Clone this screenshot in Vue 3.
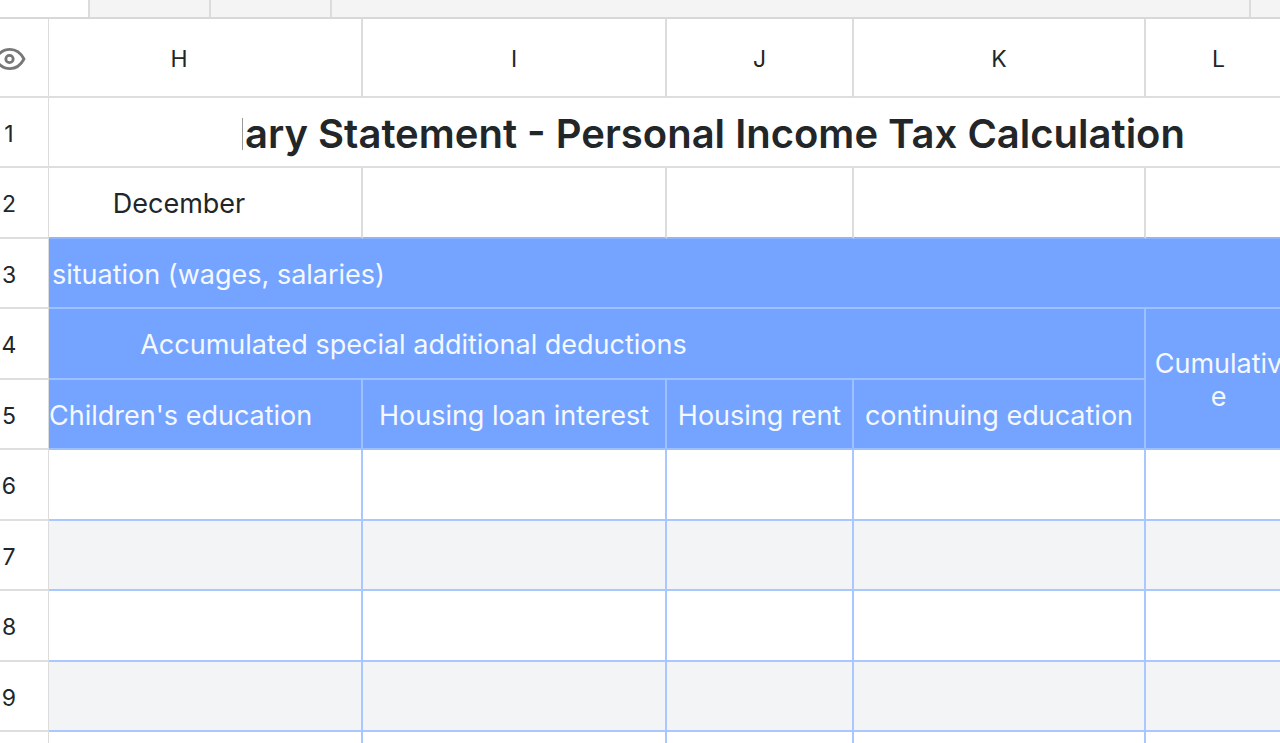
<script setup>
const columns = ['H', 'I', 'J', 'K', 'L']
const dataRows = [6, 7, 8, 9]
</script>

<template>
  <main class="sheet">
    <div class="toolbar">
      <div class="slot active"></div>
      <div class="slot narrow"></div>
      <div class="slot narrow"></div>
      <div class="slot wide"></div>
      <div class="slot tail"></div>
    </div>
    <table>
      <colgroup>
        <col class="col-index" />
        <col class="col-h" />
        <col class="col-i" />
        <col class="col-j" />
        <col class="col-k" />
        <col />
      </colgroup>
      <thead>
        <tr>
          <th class="corner">
            <button type="button" aria-label="Show hidden columns">
              <svg width="26" height="24" viewBox="6 0 26 24" fill="none" stroke="#777" stroke-width="2.8">
                <path d="M1.5 12C5 5.500 10 2.400 16 2.400S26.500 5.500 30 12C26.500 18.500 22 21.600 16 21.600S5 18.500 1.500 12Z" stroke-linejoin="round" />
                <circle cx="15.500" cy="12" r="3.700" />
              </svg>
            </button>
          </th>
          <th v-for="name in columns" :key="name" scope="col" :class="{ first: name === 'H' }">{{ name }}</th>
        </tr>
      </thead>
      <tbody>
        <tr>
          <th scope="row">1</th>
          <td colspan="5" class="title"><span>ary Statement - Personal Income Tax Calculation</span></td>
        </tr>
        <tr class="above-blue">
          <th scope="row">2</th>
          <td class="first">December</td>
          <td></td>
          <td></td>
          <td></td>
          <td></td>
        </tr>
        <tr class="blue">
          <th scope="row">3</th>
          <td colspan="5" class="group">situation (wages, salaries)</td>
        </tr>
        <tr class="blue">
          <th scope="row">4</th>
          <td colspan="4" class="subgroup">Accumulated special additional deductions</td>
          <td rowspan="2" class="cumulative">Cumulativ<br />e</td>
        </tr>
        <tr class="blue">
          <th scope="row">5</th>
          <td class="first">Children's education</td>
          <td>Housing loan interest</td>
          <td>Housing rent</td>
          <td>continuing education</td>
        </tr>
        <tr v-for="row in dataRows" :key="row" class="data" :class="{ striped: row % 2 === 1 }">
          <th scope="row">{{ row }}</th>
          <td v-for="name in columns" :key="name"></td>
        </tr>
        <tr class="data">
          <th></th>
          <td v-for="name in columns" :key="name"></td>
        </tr>
      </tbody>
    </table>
  </main>
</template>

<style>
body {
  margin: 0;
}
</style>

<style scoped>
.sheet {
  height: 100vh;
  overflow: hidden;
  background: #fff;
  color: #222629;
  font-family: Inter, "Liberation Sans", sans-serif;
  font-size: 27px;
  line-height: 33px;
}

.toolbar {
  display: flex;
  box-sizing: border-box;
  height: 19px;
  background: #f4f4f4;
  border-bottom: 2px solid #d8d8d8;
}

.slot {
  box-sizing: border-box;
  border-right: 2px solid #dcdcdc;
}

.active {
  width: 90px;
  background: #fff;
}

.narrow {
  width: 121px;
}

.wide {
  flex: 1;
}

.tail {
  width: 29px;
  border-right: 0;
}

table {
  width: calc(100% + 13px);
  table-layout: fixed;
  border-collapse: separate;
  border-spacing: 0;
}

.col-index {
  width: 49px;
}

.col-h {
  width: 314px;
}

.col-i {
  width: 304px;
}

.col-j {
  width: 187px;
}

.col-k {
  width: 292px;
}

th,
td {
  box-sizing: border-box;
  height: 70px;
  padding: 2px 0 0;
  border-right: 2px solid #dcdcdc;
  border-bottom: 2px solid #dedede;
  font-weight: 400;
  text-align: center;
  vertical-align: middle;
  white-space: nowrap;
}

tbody tr:nth-child(even) > * {
  height: 71px;
}

thead th {
  height: 79px;
  padding-top: 4px;
  font-size: 23px;
}

tbody th {
  padding-top: 4px;
  padding-right: 30px;
  border-right-width: 1px;
  font-size: 23px;
}

.corner {
  padding-top: 2px;
  border-right-width: 1px;
  text-align: left;
}

.corner button {
  display: block;
  padding: 0;
  border: 0;
  background: none;
}

.corner svg {
  display: block;
}

.first {
  padding-right: 52px;
}

.title {
  padding-left: 193px;
  font-size: 40px;
  font-weight: 600;
  text-align: left;
}

.title span {
  display: inline-block;
  padding-left: 2px;
  border-left: 1px solid #999;
  line-height: 32px;
}

.above-blue td {
  border-bottom-color: #90b5ff;
}

.blue td {
  background: #74a4ff;
  color: #f4f8ff;
  border-color: #9dc0ff;
}

.blue .group {
  padding-left: 3px;
  text-align: left;
}

.blue .subgroup {
  padding-right: 366px;
}

.data td {
  border-color: #a9c8ff;
}

.striped td {
  background: #f3f4f6;
}
</style>
